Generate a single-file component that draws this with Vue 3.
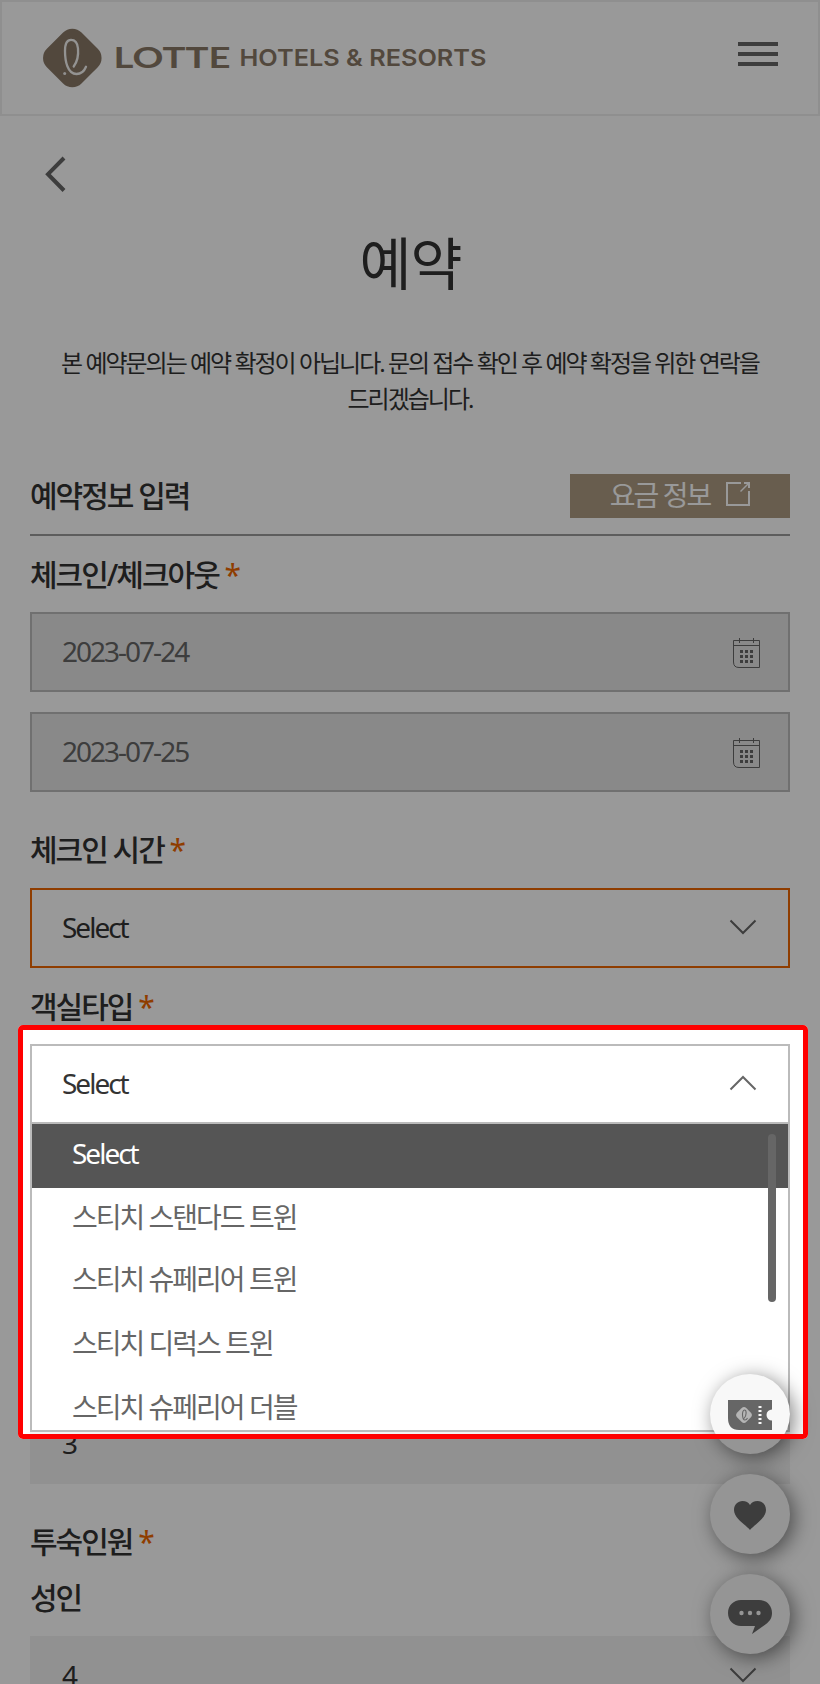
<script setup>
import { ref } from 'vue'

const dates = ref(['2023-07-24', '2023-07-25'])
const roomTypes = [
  'Select',
  '스티치 스탠다드 트윈',
  '스티치 슈페리어 트윈',
  '스티치 디럭스 트윈',
  '스티치 슈페리어 더블',
]
const selected = ref(0)
</script>

<template>
  <div class="page">
    <header class="header">
      <svg class="logo" width="450" height="60" viewBox="0 0 450 60">
        <rect x="5.800" y="5.500" width="49" height="49" rx="13" transform="rotate(45 30.300 30)" fill="#897866" />
        <path
          d="M31.700 38.500C35 34 36.600 27 36 20.500C35.500 14.500 33 11.800 29 11.800C24.500 11.800 23 16 23 23C23 33 25.500 46 34.500 46C39.500 46 42.500 42.500 44 38.800"
          fill="none" stroke="#f6f5f3" stroke-width="2.300" stroke-linecap="round"
        />
        <circle cx="22.700" cy="45.500" r="1.500" fill="#f0efed" />
        <text class="brand" x="71.500" y="40" textLength="117" lengthAdjust="spacingAndGlyphs">LOTTE</text>
        <text class="brand-sub" x="197.500" y="38.300" textLength="247" lengthAdjust="spacingAndGlyphs">HOTELS &amp; RESORTS</text>
      </svg>
      <div class="menu"><i /><i /><i /></div>
    </header>

    <div class="back">
      <svg width="24" height="40" viewBox="0 0 24 40">
        <path d="M20 4L4 20.200L20 36.500" fill="none" stroke="#666" stroke-width="4" />
      </svg>
    </div>

    <h1 class="title">예약</h1>
    <p class="desc">본 예약문의는 예약 확정이 아닙니다. 문의 접수 확인 후 예약 확정을 위한 연락을<br>드리겠습니다.</p>

    <main class="form">
      <div class="section">
        <h2 class="label">예약정보 입력</h2>
        <a class="rate">
          <span>요금 정보</span>
          <svg width="24" height="24" viewBox="0 0 24 24" fill="none" stroke="#fff">
            <path d="M15 1H1V23H23V9" stroke-width="2" />
            <path d="M14.500 9.500L22 2" stroke-width="1.500" />
            <path d="M18 1H23V6" stroke-width="2" />
          </svg>
        </a>
      </div>

      <div class="label row-a">체크인/체크아웃 <b>*</b></div>
      <div v-for="d in dates" :key="d" class="field date">
        <span>{{ d }}</span>
        <svg width="27" height="30" viewBox="0 0 27 30">
          <path d="M.5 2.500H26.500V29.500H6Q.5 29.500 .5 24ZM.5 7.500H26.500M6.500 0V5M20.500 0V5" fill="none" stroke="#666" />
          <path d="M7 13.500H20M7 18.500H20M7 23.500H20" fill="none" stroke="#666" stroke-width="3" stroke-dasharray="3 2" />
        </svg>
      </div>

      <div class="label row-b">체크인 시간 <b>*</b></div>
      <div class="field active">
        <span>Select</span>
        <svg class="chev" width="28" height="16" viewBox="0 0 28 16"><path d="M1.500 1.500L14 14L26.500 1.500" /></svg>
      </div>

      <div class="label row-c">객실타입 <b>*</b></div>
      <div class="combo">
        <div class="field open">
          <span>Select</span>
          <svg class="chev" width="28" height="16" viewBox="0 0 28 16"><path d="M1.500 14.500L14 2L26.500 14.500" /></svg>
        </div>
        <ul class="list">
          <li v-for="(r, i) in roomTypes" :key="r" :class="{ on: i === selected }" @click="selected = i">{{ r }}</li>
          <span class="thumb" />
        </ul>
      </div>

      <div class="field plain rooms"><span>3</span></div>
      <div class="label row-d">투숙인원 <b>*</b></div>
      <div class="label row-e">성인</div>
      <div class="field plain">
        <span>4</span>
        <svg class="chev" width="28" height="16" viewBox="0 0 28 16"><path d="M1.500 1.500L14 14L26.500 1.500" /></svg>
      </div>
    </main>

    <nav class="fabs">
      <a class="fab">
        <svg width="44" height="30" viewBox="0 0 44 30">
          <path d="M0 0H44V9.500A5.500 5.500 0 0 0 44 20.500V30H11Q0 30 0 18Z" fill="#666" />
          <rect x="9.500" y="8.500" width="13" height="13" rx="3.500" transform="rotate(45 16 15)" fill="#b5b5b5" />
          <path d="M16 18.500C19 15 18.500 10 16.500 10C13.500 10 14 20 17 20Q18.500 20 19.500 18" fill="none" stroke="#666" stroke-width="1.100" />
          <path d="M32 6V25" stroke="#f8f8f8" stroke-width="3" stroke-dasharray="2 2" />
        </svg>
      </a>
      <a class="fab">
        <svg width="32" height="29" viewBox="0 0 32 29">
          <path d="M16 29C12 24 0 17.500 0 9C0 3.500 4 0 8.500 0C12 0 14.500 1.500 16 4C17.500 1.500 20 0 23.500 0C28 0 32 3.500 32 9C32 17.500 20 24 16 29Z" fill="#666" />
        </svg>
      </a>
      <a class="fab">
        <svg class="chat" width="44" height="34" viewBox="0 0 44 34">
          <path d="M13 0H31C38.500 0 44 5.500 44 13C44 19 41 22 36 25.500L24 34L27 26H13C5.500 26 0 20.500 0 13S5.500 0 13 0Z" fill="#666" />
          <g fill="#f8f8f8"><circle cx="13.500" cy="13" r="2.200" /><circle cx="22" cy="13" r="2.200" /><circle cx="30.500" cy="13" r="2.200" /></g>
        </svg>
      </a>
    </nav>

    <div class="spotlight" />
  </div>
</template>

<style>
body { margin: 0; }
</style>

<style scoped>
* { box-sizing: border-box; }
.page {
  position: relative;
  width: 820px;
  height: 1684px;
  overflow: hidden;
  background: #fff;
  color: #333;
  font-family: "Noto Sans", "Noto Sans CJK KR", sans-serif;
  font-size: 28px;
  letter-spacing: -2px;
}
.header {
  display: flex;
  justify-content: space-between;
  height: 116px;
  border: 2px solid #eee;
  padding: 26px 40px 0 41px;
}
.logo { flex: none; margin-left: -1px; }
.brand { font: 700 28.500px Lato, sans-serif; fill: #897866; letter-spacing: 0; }
.brand-sub { font: 600 23px Inter, sans-serif; fill: #897866; letter-spacing: 0; }
.menu { display: flex; flex-direction: column; gap: 6px; padding-top: 14px; }
.menu i { width: 40px; height: 4px; background: #666; }
.back { height: 76px; padding: 38px 0 0 44px; }
.title { margin: 32px 0 0; height: 81px; padding-left: 1px; line-height: 80px; text-align: center; font-size: 56.500px; font-weight: 400; letter-spacing: -1.100px; }
.desc { margin: 40px 0 0; height: 129px; text-align: center; font-size: 24px; line-height: 36px; letter-spacing: -2px; white-space: nowrap; }
.form { padding: 0 30px; }
.section { display: flex; justify-content: space-between; height: 62px; border-bottom: 2px solid #9b9b9b; }
.label { margin: 0; font-size: 30px; font-weight: 500; line-height: 44px; height: 44px; letter-spacing: -2px; }
.label b { font-weight: 400; color: #e60; }
.rate {
  display: flex;
  align-items: center;
  justify-content: center;
  gap: 16px;
  width: 220px;
  height: 44px;
  padding-bottom: 4px;
  background: #ad9b82;
  color: #fff;
}
.row-a { margin: 17px 0 15px; }
.row-b { margin: 36px 0 16px; }
.row-c { margin: 17px 0 15px; }
.field {
  display: flex;
  align-items: center;
  justify-content: space-between;
  height: 80px;
  border: 2px solid #bbb;
  padding: 0 31px 2px 30px;
}
.date { background: #e5e5e5; color: #666; padding-right: 28px; }
.date svg { margin-top: 3px; }
.date + .date { margin-top: 20px; }
.active { border-color: #e60; }
.chev { fill: none; stroke: #666; stroke-width: 2; }
.combo { position: relative; height: 80px; }
.open { background: #fff; }
.list {
  position: absolute;
  z-index: 1;
  top: 80px;
  left: 0;
  right: 0;
  height: 308px;
  margin: 0;
  padding: 0;
  list-style: none;
  overflow: hidden;
  background: #fff;
  border: 2px solid #bbb;
  border-top: 0;
  color: #666;
}
.list li { height: 63.300px; line-height: 58px; padding-left: 40px; }
.list li:nth-child(3), .list li:nth-child(4) { line-height: 57px; }
.list .on { height: 64px; background: #555; color: #fff; }
.thumb { position: absolute; top: 10px; right: 12px; width: 8px; height: 168px; border-radius: 4px; background: #666; }
.plain { border-color: #f2f2f2; background: #f2f2f2; }
.rooms { margin-top: 280px; }
.row-d { margin: 36px 0 12px; }
.row-e { margin-bottom: 16px; }
.fabs { position: absolute; z-index: 2; right: 30px; top: 1374px; display: grid; gap: 20px; }
.fab {
  display: flex;
  align-items: center;
  justify-content: center;
  width: 80px;
  height: 80px;
  border-radius: 50%;
  background: #f8f8f8;
  box-shadow: 4px 4px 20px rgba(0, 0, 0, .5);
}
.fab svg { margin-top: 2px; }
.fab .chat { margin-top: 5px; }
.spotlight {
  position: absolute;
  z-index: 3;
  left: 18px;
  top: 1025px;
  width: 790px;
  height: 414px;
  border: 5px solid #f00;
  border-radius: 5px;
  box-shadow: 0 0 0 2000px rgba(0, 0, 0, .4);
  pointer-events: none;
}
</style>
